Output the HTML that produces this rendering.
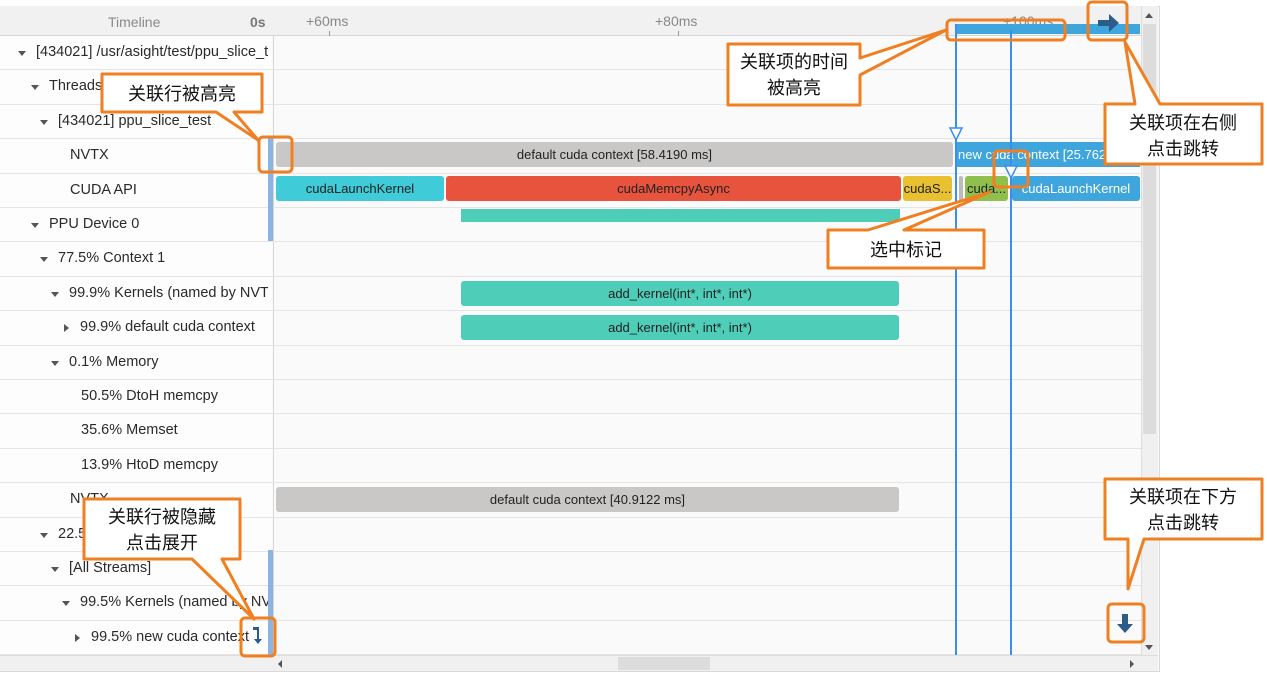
<!DOCTYPE html>
<html><head><meta charset="utf-8"><style>
*{margin:0;padding:0;box-sizing:border-box}
body{width:1267px;height:675px;background:#fff;position:relative;overflow:hidden;font-family:"Liberation Sans","Noto Sans CJK SC",sans-serif;}
.a{position:absolute}
.app{left:0;top:6px;width:1160px;height:666px;background:#fafafa;border:1px solid #d8d8d8}
.hdr{left:0;top:6px;width:1142px;height:30px;background:#f1f1f1;border-bottom:1px solid #d6d6d6}
.row{position:absolute;left:0;width:1141px;height:34.4px;border-bottom:1px solid #e5e5e5}
.lbl{position:absolute;font-size:14.5px;color:#2a2a2a;white-space:nowrap;overflow:hidden}
.tri{position:absolute;width:0;height:0;border-left:4px solid transparent;border-right:4px solid transparent;border-top:5px solid #555}
.trr{position:absolute;width:0;height:0;border-top:4px solid transparent;border-bottom:4px solid transparent;border-left:5px solid #555}
.bar{position:absolute;border-radius:3px;font-size:13px;color:#222;text-align:center;white-space:nowrap;overflow:hidden}
</style></head><body>
<div class="a app"></div>
<div class="a" style="left:0;top:36px;width:272px;height:619px;background:#fdfdfd"></div>
<div class="a" style="left:273px;top:6px;width:1px;height:650px;background:#d6d6d6"></div>
<div class="a hdr"></div>
<div class="a" style="left:108px;top:14px;font-size:14px;color:#8a8a8a">Timeline</div>
<div class="a" style="left:250px;top:14px;font-size:14px;color:#777;font-weight:bold">0s</div>
<div class="a" style="left:306px;top:13px;font-size:14px;color:#888">+60ms</div>
<div class="a" style="left:655px;top:13px;font-size:14px;color:#888">+80ms</div>
<div class="a" style="left:1003px;top:13px;font-size:14px;color:#888">+100ms</div>
<div class="a" style="left:329px;top:31px;width:1px;height:5px;background:#999"></div>
<div class="a" style="left:678px;top:31px;width:1px;height:5px;background:#999"></div>
<div class="a" style="left:955px;top:24px;width:185px;height:10px;background:#3ea6dc"></div>

<div id="rows"></div>
<script>
var R=[["[434021] /usr/asight/test/ppu_slice_test",22,"d"],["Threads",35,"d"],["[434021] ppu_slice_test",44,"d"],["NVTX",59,""],["CUDA API",59,""],["PPU Device 0",35,"d"],["77.5% Context 1",44,"d"],["99.9% Kernels (named by NVTX)",55,"d"],["99.9% default cuda context",66,"r"],["0.1% Memory",55,"d"],["50.5% DtoH memcpy",70,""],["35.6% Memset",70,""],["13.9% HtoD memcpy",70,""],["NVTX",59,""],["22.5% Context 2",44,"d"],["[All Streams]",55,"d"],["99.5% Kernels (named by NVTX)",66,"d"],["99.5% new cuda context",77,"r"]];
var h="";
for(var i=0;i<R.length;i++){var t=36+i*34.4;var r=R[i];
h+='<div class="row" style="top:'+t+'px"></div>';
var tx=r[2]?r[1]+14:r[1]+11;
if(r[2]=="d")h+='<div class="tri" style="left:'+(r[1]-4)+'px;top:'+(t+15)+'px"></div>';
if(r[2]=="r")h+='<div class="trr" style="left:'+(r[1]-2)+'px;top:'+(t+13)+'px"></div>';
h+='<div class="lbl" style="left:'+tx+'px;top:'+(t+8)+'px;width:'+(268-tx)+'px">'+r[0]+'</div>';}
document.getElementById("rows").innerHTML=h;
</script>
<div class="a" style="left:268px;top:138px;width:5px;height:103px;background:#8ab4e4"></div>
<div class="a" style="left:268px;top:550px;width:5px;height:105px;background:#8ab4e4"></div>

<div class="bar" style="left:276px;top:142px;width:677px;height:25px;line-height:25px;background:#c9c8c7">default cuda context [58.4190 ms]</div>
<div class="bar" style="left:955px;top:142px;width:185px;height:25px;line-height:25px;background:#3ea6dc;color:#fff;text-align:left;padding-left:3px;border-radius:3px 0 0 3px">new cuda context [25.7621 ms]</div>
<div class="bar" style="left:276px;top:176px;width:168px;height:25px;line-height:25px;background:#3fcbd8">cudaLaunchKernel</div>
<div class="bar" style="left:446px;top:176px;width:455px;height:25px;line-height:25px;background:#e8533d">cudaMemcpyAsync</div>
<div class="bar" style="left:903px;top:176px;width:49px;height:25px;line-height:25px;background:#e8c030">cudaS...</div>
<div class="bar" style="left:959px;top:176px;width:4px;height:25px;background:#bbb"></div>
<div class="bar" style="left:965px;top:176px;width:43px;height:25px;line-height:25px;background:#8fbf4c">cuda...</div>
<div class="bar" style="left:1012px;top:176px;width:128px;height:25px;line-height:25px;background:#3ea6dc;color:#fff">cudaLaunchKernel</div>
<div class="bar" style="left:461px;top:209px;width:439px;height:13px;background:#4ecdb8;border-radius:0"></div>
<div class="bar" style="left:461px;top:281px;width:438px;height:25px;line-height:25px;background:#4ecdb8">add_kernel(int*, int*, int*)</div>
<div class="bar" style="left:461px;top:315px;width:438px;height:25px;line-height:25px;background:#4ecdb8">add_kernel(int*, int*, int*)</div>
<div class="bar" style="left:276px;top:487px;width:623px;height:25px;line-height:25px;background:#c9c8c7">default cuda context [40.9122 ms]</div>

<div class="a" style="left:955px;top:24px;width:2px;height:632px;background:#3b8ef0"></div>
<div class="a" style="left:1010px;top:30px;width:2px;height:626px;background:#3b8ef0"></div>

<div class="a" style="left:1141px;top:6px;width:17px;height:650px;background:#f0f0f0;border-left:1px solid #ddd"></div>
<div class="a" style="left:1143px;top:24px;width:13px;height:410px;background:#dcdcdc"></div>
<div class="a" style="left:0;top:655px;width:1158px;height:16px;background:#f0f0f0;border-top:1px solid #ddd"></div>
<div class="a" style="left:618px;top:657px;width:92px;height:13px;background:#dcdcdc"></div>

<svg class="a" style="left:0;top:0" width="1267" height="675">
<g fill="#fff" stroke="#fff" stroke-width="1.5">
<polygon points="956,128 950,128 956,140 962,128" stroke="#3b8ef0" fill="#fff"/>
<polygon points="1005,166 1017,166 1011,178" stroke="#3b8ef0" fill="#fff"/>
</g>
<g fill="#555"><polygon points="1145,18 1153,18 1149,13"/><polygon points="1145,645 1153,645 1149,650"/><polygon points="282,660 282,668 278,664"/><polygon points="1130,660 1130,668 1134,664"/></g>
<path d="M1098 20h11v-6l10 9-10 9v-6h-11z" fill="#2b5c8a"/>
<path d="M1122 614h6v10h5l-8 9-8-9h5z" fill="#2b5c8a"/>
<path d="M253 627h6v12h3l-4 5-4-5h3v-9h-4z" fill="#2b5c8a"/>
<g fill="none" stroke="#f07f22" stroke-width="3">
<rect x="259" y="137" width="33" height="35" rx="4"/>
<rect x="947" y="20" width="118" height="20" rx="4"/>
<rect x="1088" y="2" width="39" height="38" rx="4"/>
<rect x="994" y="151" width="34" height="36" rx="4"/>
<rect x="241" y="618" width="34" height="38" rx="4"/>
<rect x="1108" y="604" width="36" height="38" rx="4"/>
</g>
<g fill="#fff" stroke="#f07f22" stroke-width="3" stroke-linejoin="round">
<path d="M102 74h160v38h-28l24 28-42-28h-114z"/>
<path d="M728 44h132v14l86-28-86 45v30h-132z"/>
<path d="M1105 104h30l-10-62 35 62h102v60h-157z"/>
<path d="M828 230h40l122-38-86 38h80v38h-156z"/>
<path d="M84 499h156v60h-18l32 60-62-60h-108z"/>
<path d="M1105 479h157v60h-118l-16 50v-50h-23z"/>
</g>
<g font-family="Liberation Sans,Noto Sans CJK SC,sans-serif" font-size="18" fill="#111" text-anchor="middle">
<text x="182" y="100">关联行被高亮</text>
<text x="794" y="68">关联项的时间</text><text x="794" y="94">被高亮</text>
<text x="1183" y="129">关联项在右侧</text><text x="1183" y="155">点击跳转</text>
<text x="906" y="256">选中标记</text>
<text x="162" y="523">关联行被隐藏</text><text x="162" y="549">点击展开</text>
<text x="1183" y="503">关联项在下方</text><text x="1183" y="529">点击跳转</text>
</g>
</svg>
</body></html>
